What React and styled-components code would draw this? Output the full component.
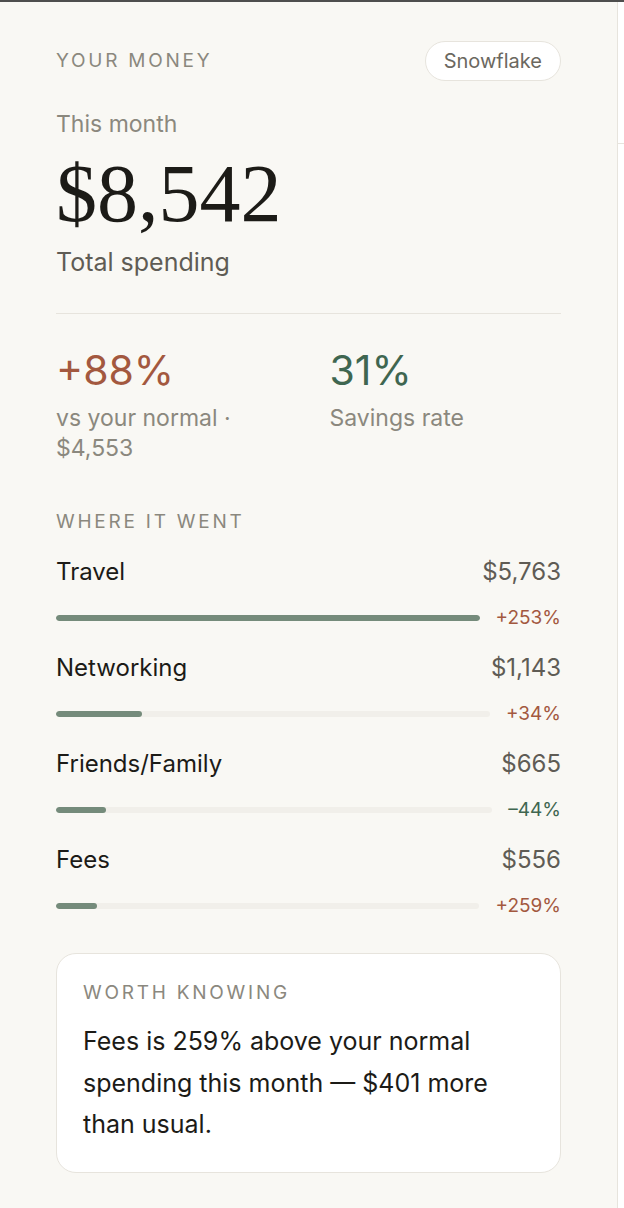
import React from "react";
import styled, { createGlobalStyle } from "styled-components";

const colors = {
  page: "#f9f8f4",
  line: "#e7e4dd",
  ink: "#1c1b17",
  soft: "#5f5c55",
  muted: "#8b887e",
  up: "#a3583f",
  down: "#3f6650",
  bar: "#758b7b",
  track: "#f1efea"
};

const GlobalStyle = createGlobalStyle`
  html, body {
    margin: 0;
    padding: 0;
    background: #ffffff;
  }
  body {
    font-family: Inter, "Noto Sans", sans-serif;
    -webkit-font-smoothing: antialiased;
  }
`;

const Frame = styled.div`
  display: flex;
  min-height: 100vh;
  border-top: 2px solid #4e4e4e;
  box-sizing: border-box;
`;

const Panel = styled.section`
  width: 618px;
  flex: 0 0 618px;
  box-sizing: border-box;
  padding: 39px 56px 36px;
  background: ${colors.page};
  border-right: 1px solid ${colors.line};
  display: flex;
  flex-direction: column;
`;

const Aside = styled.div`
  flex: 1;
  padding-top: 141px;

  > div {
    height: 1px;
    background: ${colors.line};
  }
`;

const Header = styled.div`
  display: flex;
  align-items: center;
  justify-content: space-between;
`;

const Label = styled.div`
  font-size: 19px;
  line-height: 20px;
  letter-spacing: 0.145em;
  text-transform: uppercase;
  color: ${colors.muted};
`;

const Pill = styled.div`
  height: 40px;
  box-sizing: border-box;
  padding: 0 18px;
  display: flex;
  align-items: center;
  border: 1.5px solid ${colors.line};
  border-radius: 999px;
  background: #fff;
  font-size: 20px;
  color: #6b6860;
`;

const Period = styled.div`
  margin-top: 29px;
  font-size: 23px;
  line-height: 28px;
  color: ${colors.muted};
`;

const Total = styled.div`
  margin-top: 16px;
  font-family: "Liberation Serif", "Times New Roman", serif;
  font-size: 82px;
  line-height: 80px;
  color: ${colors.ink};
`;

const TotalCaption = styled.div`
  margin-top: 13px;
  font-size: 25px;
  line-height: 30px;
  color: ${colors.soft};
`;

const Divider = styled.hr`
  margin: 36px 0 0;
  border: 0;
  height: 1px;
  background: ${colors.line};
`;

const Stats = styled.div`
  display: grid;
  grid-template-columns: 1fr 1fr;
  column-gap: 42px;
  padding-top: 33px;
`;

const StatValue = styled.div`
  font-size: 41px;
  line-height: 46px;
  color: ${(p) => p.tone};
`;

const StatCaption = styled.div`
  margin-top: 10px;
  font-size: 23px;
  line-height: 30px;
  color: ${colors.muted};
`;

const Section = styled.div`
  margin-top: 49px;
`;

const Rows = styled.div`
  margin-top: 25px;
  display: flex;
  flex-direction: column;
  gap: 23px;
`;

const Row = styled.div`
  display: flex;
  flex-direction: column;
  gap: 19px;
`;

const RowTop = styled.div`
  display: flex;
  justify-content: space-between;
  font-size: 24px;
  line-height: 30px;
`;

const Name = styled.span`
  color: ${colors.ink};
`;

const Amount = styled.span`
  color: ${colors.soft};
`;

const RowBottom = styled.div`
  display: flex;
  align-items: center;
  gap: 16px;
`;

const Track = styled.div`
  flex: 1;
  height: 6px;
  border-radius: 3px;
  background: ${colors.track};
  overflow: hidden;
`;

const Fill = styled.div`
  height: 100%;
  border-radius: 3px;
  background: ${colors.bar};
`;

const Change = styled.span`
  font-size: 19px;
  line-height: 24px;
  color: ${(p) => (p.negative ? colors.down : colors.up)};
`;

const Card = styled.div`
  margin-top: 35px;
  padding: 29px 26px 26px;
  background: #fff;
  border: 1.5px solid ${colors.line};
  border-radius: 20px;
`;

const CardText = styled.p`
  margin: 18px 0 0;
  font-size: 25px;
  line-height: 41.5px;
  color: ${colors.ink};
`;

const categories = [
  { name: "Travel", amount: 5763, change: "+253%" },
  { name: "Networking", amount: 1143, change: "+34%" },
  { name: "Friends/Family", amount: 665, change: "\u201344%", negative: true },
  { name: "Fees", amount: 556, change: "+259%" }
];

const money = (n) => "$" + n.toLocaleString("en-US");

export default function App() {
  const max = Math.max(...categories.map((c) => c.amount));
  return (
    <>
      <GlobalStyle />
      <Frame>
        <Panel>
          <Header>
            <Label>Your money</Label>
            <Pill>Snowflake</Pill>
          </Header>
          <Period>This month</Period>
          <Total>$8,542</Total>
          <TotalCaption>Total spending</TotalCaption>
          <Divider />
          <Stats>
            <div>
              <StatValue tone={colors.up}>+88%</StatValue>
              <StatCaption>vs your normal · $4,553</StatCaption>
            </div>
            <div>
              <StatValue tone={colors.down}>31%</StatValue>
              <StatCaption>Savings rate</StatCaption>
            </div>
          </Stats>
          <Section>
            <Label>Where it went</Label>
            <Rows>
              {categories.map((c) => (
                <Row key={c.name}>
                  <RowTop>
                    <Name>{c.name}</Name>
                    <Amount>{money(c.amount)}</Amount>
                  </RowTop>
                  <RowBottom>
                    <Track>
                      <Fill style={{ width: `${(c.amount / max) * 100}%` }} />
                    </Track>
                    <Change negative={c.negative}>{c.change}</Change>
                  </RowBottom>
                </Row>
              ))}
            </Rows>
          </Section>
          <Card>
            <Label>Worth knowing</Label>
            <CardText>
              Fees is 259% above your normal spending this month — $401 more
              than usual.
            </CardText>
          </Card>
        </Panel>
        <Aside>
          <div />
        </Aside>
      </Frame>
    </>
  );
}
